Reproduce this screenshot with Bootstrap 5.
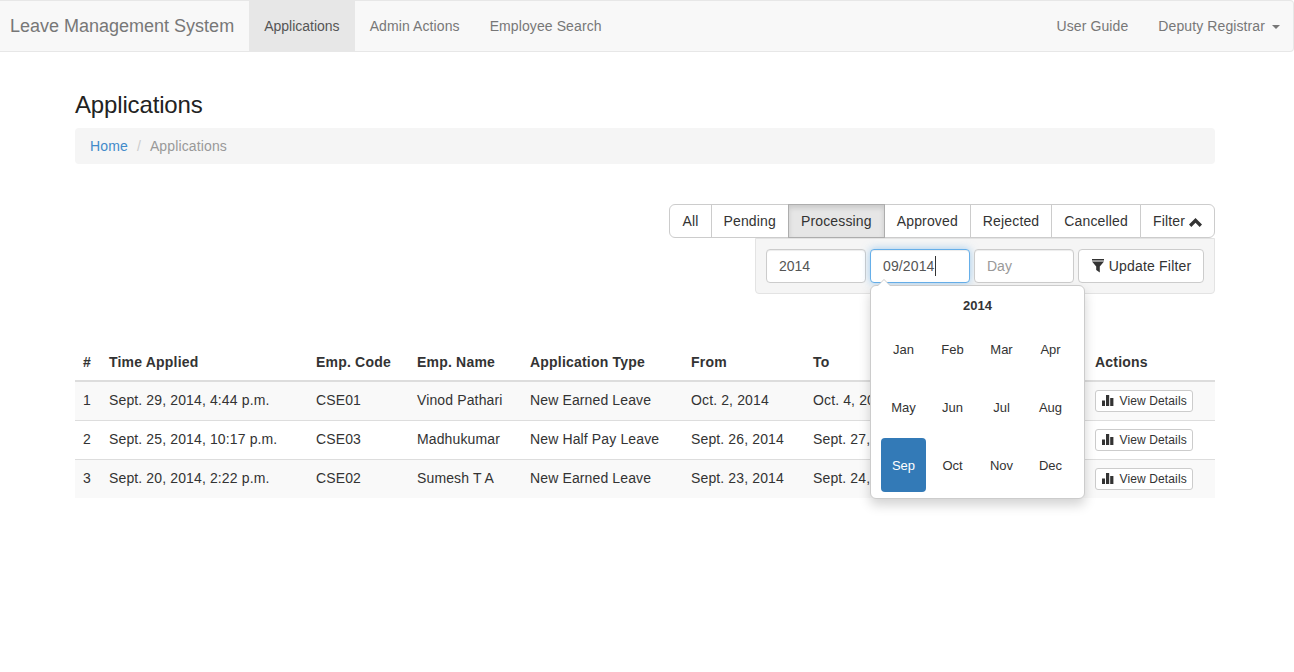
<!DOCTYPE html>
<html lang="en">
<head>
  <meta charset="UTF-8">
  <title>Leave Management System</title>
  <link href="https://cdn.jsdelivr.net/npm/bootstrap@5.3.0/dist/css/bootstrap.min.css" rel="stylesheet">
  <style>
    body { font-family: "Liberation Sans", Arial, sans-serif; font-size: 14px; line-height: 20px; color: #333; letter-spacing: .13px; min-height: 672px; }
    .top-bar { height: 52px; padding: 0; background: #f8f8f8; border: 1px solid #e7e7e7; border-left: 0; border-radius: 0 4px 4px 0; flex-wrap: nowrap; }
    .top-bar .navbar-brand { font-size: 18px; line-height: 20px; letter-spacing: 0; color: #777; padding: 15px 15px 15px 10px; margin: 0; }
    .top-bar .nav-link { color: #777; padding: 15px; line-height: 20px; height: 50px; letter-spacing: .1px; }
    .top-bar .nav-link.active { color: #555; background: #e7e7e7; letter-spacing: 0; }
    .top-bar .nav-link.dropdown-toggle { padding-right: 13px; }
    .top-bar .dropdown-toggle::after { border-top-color: #777; margin-left: 7px; vertical-align: 2px; border-width: 4px 4px 0; }
    .page-wrap { width: 1170px; margin-left: 60px; padding: 0 15px 120px; }
    .page-title { font-size: 24px; line-height: 26px; letter-spacing: -.15px; font-weight: 500; color: #222; margin: 40px 0 10px; }
    .crumbs { background: #f5f5f5; border-radius: 4px; padding: 8px 15px; margin: 0 0 40px; height: 36px; }
    .crumbs a { color: #428bca; text-decoration: none; }
    .crumbs .breadcrumb-item.active { color: #999; }
    .crumbs .breadcrumb-item + .breadcrumb-item { padding-left: 9px; }
    .crumbs .breadcrumb-item + .breadcrumb-item::before { color: #ccc; padding-right: 9px; }
    .status-btn { font-size: 14px; line-height: 20px; letter-spacing: .15px; padding: 6px 12px; color: #333; background: #fff; border: 1px solid #ccc; }
    .status-btn.active { color: #333; background: #e6e6e6; border-color: #adadad; box-shadow: inset 0 3px 5px rgba(0,0,0,.125); }
    .filter-box { width: 460px; height: 56px; margin-left: auto; background: #f5f5f5; border: 1px solid #e3e3e3; border-radius: 0 0 4px 4px; padding: 10px; position: relative; z-index: 5; }
    .filter-input { flex: 0 0 100px; width: 100px; height: 34px; font-size: 14px; line-height: 20px; padding: 6px 12px; color: #555; background: #fff; border: 1px solid #ccc; border-radius: 4px; box-shadow: inset 0 1px 1px rgba(0,0,0,.075); }
    .filter-input::placeholder { color: #999; }
    .filter-input.focused { border-color: #66afe9; box-shadow: inset 0 1px 1px rgba(0,0,0,.075), 0 0 8px rgba(102,175,233,.6); }
    .caret-mark { display: inline-block; width: 1px; height: 20px; background: #333; }
    .typed { display: flex; align-items: center; }
    .update-btn { flex: 0 0 126px; font-size: 14px; line-height: 20px; letter-spacing: .2px; height: 34px; padding: 6px 0; text-align: center; color: #333; background: #fff; border: 1px solid #ccc; border-radius: 4px; white-space: nowrap; }
    .update-btn svg { vertical-align: -2px; margin: 0 1px 0 1px; }
    .leave-table { table-layout: fixed; width: 1140px; margin: 50px 0 0; color: #333; border-collapse: separate; border-spacing: 0; }
    .leave-table th { padding: 8px; line-height: 20px; font-weight: 700; letter-spacing: .2px; border-top: 0; border-bottom: 2px solid #ddd; color: #333; height: 38px; }
    .leave-table td { padding: 8px; line-height: 20px; height: 39px; border-bottom: 0; border-top: 1px solid #ddd; white-space: nowrap; color: #333; vertical-align: top; overflow: hidden; }
    .leave-table tbody tr:first-child td { border-top: 0; height: 38px; }
    .leave-table tbody tr:nth-child(odd) td { background: #f9f9f9; }
    .details-btn { display: block; width: fit-content; font-size: 12px; line-height: 18px; padding: 1px 5px; height: 22px; border: 1px solid #ccc; border-radius: 3px; color: #333; background: #fff; text-decoration: none; }
    .details-btn svg { vertical-align: -1px; margin: 0 2px 0 1px; }
    .month-pop { position: absolute; top: 46px; left: 114px; width: 215px; height: 214px; background: #fff; border: 1px solid #ccc; border-radius: 6px; padding: 0 10px; font-size: 13px; letter-spacing: 0; box-shadow: 0 6px 12px rgba(0,0,0,.175); z-index: 20; }
    .month-pop::before { content: ""; position: absolute; top: -7px; left: 6px; border-left: 7px solid transparent; border-right: 7px solid transparent; border-bottom: 7px solid #ccc; }
    .month-pop::after { content: ""; position: absolute; top: -6px; left: 7px; border-left: 6px solid transparent; border-right: 6px solid transparent; border-bottom: 6px solid #fff; }
    .pop-year { text-align: center; font-weight: 700; line-height: 32px; height: 36px; padding-top: 4px; }
    .month-grid { display: grid; grid-template-columns: repeat(4, 45px); grid-auto-rows: 54px; gap: 4px; }
    .month-cell { display: flex; align-items: center; justify-content: center; padding-top: 2px; border-radius: 4px; color: #333; }
    .month-cell.picked { background: #337ab7; color: #fff; }
  </style>
</head>
<body>
  <nav class="navbar top-bar">
    <div class="d-flex">
      <a class="navbar-brand" href="#">Leave Management System</a>
      <ul class="navbar-nav flex-row">
        <li class="nav-item"><a class="nav-link active" href="#">Applications</a></li>
        <li class="nav-item"><a class="nav-link" href="#">Admin Actions</a></li>
        <li class="nav-item"><a class="nav-link" href="#">Employee Search</a></li>
      </ul>
    </div>
    <ul class="navbar-nav flex-row ms-auto">
      <li class="nav-item"><a class="nav-link" href="#">User Guide</a></li>
      <li class="nav-item"><a class="nav-link dropdown-toggle" href="#">Deputy Registrar</a></li>
    </ul>
  </nav>

  <div class="page-wrap">
    <h1 class="page-title">Applications</h1>
    <ol class="breadcrumb crumbs">
      <li class="breadcrumb-item"><a href="#">Home</a></li>
      <li class="breadcrumb-item active">Applications</li>
    </ol>

    <div class="d-flex justify-content-end">
      <div class="btn-group">
        <button type="button" class="btn status-btn">All</button>
        <button type="button" class="btn status-btn">Pending</button>
        <button type="button" class="btn status-btn active">Processing</button>
        <button type="button" class="btn status-btn">Approved</button>
        <button type="button" class="btn status-btn">Rejected</button>
        <button type="button" class="btn status-btn">Cancelled</button>
        <button type="button" class="btn status-btn">Filter <svg width="13" height="9" viewBox="0 0 13 9"><path d="M6.5 0 L13 6.5 L10.7 9 L6.5 4.8 L2.3 9 L0 6.5 Z" fill="#333"/></svg></button>
      </div>
    </div>

    <div class="filter-box d-flex gap-1">
      <input class="filter-input" value="2014">
      <div class="filter-input focused typed">09/2014<span class="caret-mark"></span></div>
      <input class="filter-input" placeholder="Day">
      <button type="button" class="update-btn"><svg width="12" height="14" viewBox="0 0 12 14"><path d="M0 0 H12 V1.5 H0 Z M0 2.5 H12 L7.8 7.5 V13.5 L4.2 11 V7.5 Z" fill="#333"/></svg> Update Filter</button>
      <div class="month-pop">
        <div class="pop-year">2014</div>
        <div class="month-grid">
          <div class="month-cell">Jan</div><div class="month-cell">Feb</div><div class="month-cell">Mar</div><div class="month-cell">Apr</div>
          <div class="month-cell">May</div><div class="month-cell">Jun</div><div class="month-cell">Jul</div><div class="month-cell">Aug</div>
          <div class="month-cell picked">Sep</div><div class="month-cell">Oct</div><div class="month-cell">Nov</div><div class="month-cell">Dec</div>
        </div>
      </div>
    </div>

    <table class="table leave-table">
      <colgroup>
        <col style="width: 26px"><col style="width: 207px"><col style="width: 101px"><col style="width: 113px"><col style="width: 161px"><col style="width: 122px"><col style="width: 122px"><col style="width: 160px"><col style="width: 128px">
      </colgroup>
      <thead>
        <tr><th>#</th><th>Time Applied</th><th>Emp. Code</th><th>Emp. Name</th><th>Application Type</th><th>From</th><th>To</th><th></th><th>Actions</th></tr>
      </thead>
      <tbody>
        <tr><td>1</td><td>Sept. 29, 2014, 4:44 p.m.</td><td>CSE01</td><td>Vinod Pathari</td><td>New Earned Leave</td><td>Oct. 2, 2014</td><td>Oct. 4, 2014</td><td></td><td><a class="details-btn" href="#"><svg width="12" height="11" viewBox="0 0 12 11"><path d="M0 5.5 H3 V11 H0 Z M4 0 H7.2 V11 H4 Z M8.2 3 H11.4 V11 H8.2 Z" fill="#333"/></svg> View Details</a></td></tr>
        <tr><td>2</td><td>Sept. 25, 2014, 10:17 p.m.</td><td>CSE03</td><td>Madhukumar</td><td>New Half Pay Leave</td><td>Sept. 26, 2014</td><td>Sept. 27, 2014</td><td></td><td><a class="details-btn" href="#"><svg width="12" height="11" viewBox="0 0 12 11"><path d="M0 5.5 H3 V11 H0 Z M4 0 H7.2 V11 H4 Z M8.2 3 H11.4 V11 H8.2 Z" fill="#333"/></svg> View Details</a></td></tr>
        <tr><td>3</td><td>Sept. 20, 2014, 2:22 p.m.</td><td>CSE02</td><td>Sumesh T A</td><td>New Earned Leave</td><td>Sept. 23, 2014</td><td>Sept. 24, 2014</td><td></td><td><a class="details-btn" href="#"><svg width="12" height="11" viewBox="0 0 12 11"><path d="M0 5.5 H3 V11 H0 Z M4 0 H7.2 V11 H4 Z M8.2 3 H11.4 V11 H8.2 Z" fill="#333"/></svg> View Details</a></td></tr>
      </tbody>
    </table>
  </div>
</body>
</html>
